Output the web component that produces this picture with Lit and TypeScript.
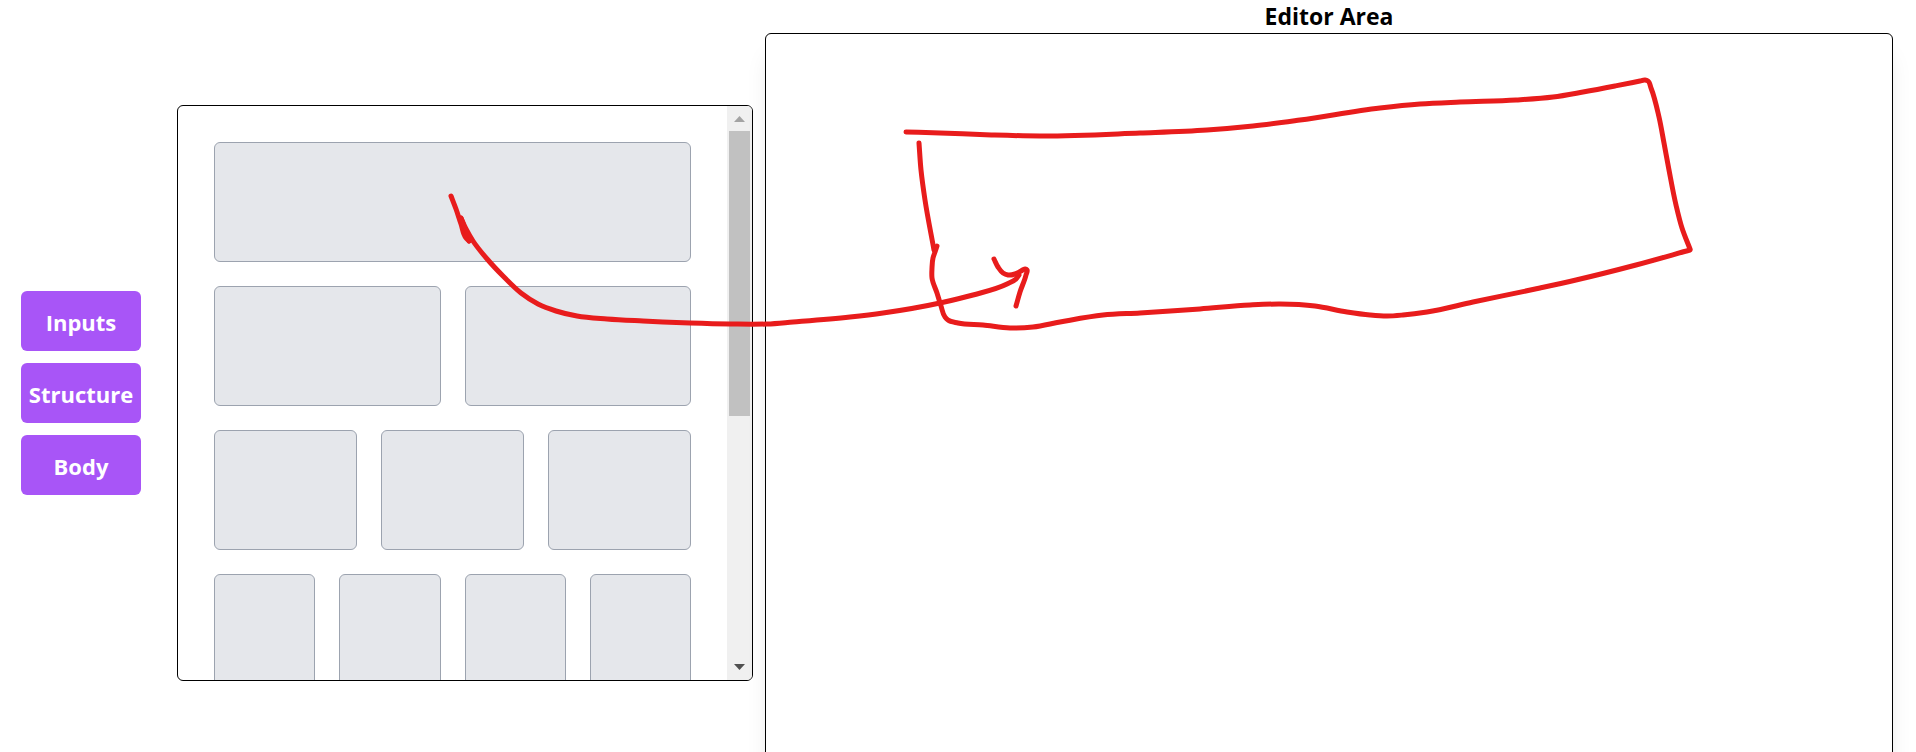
import { LitElement, html, css, svg } from "lit";
import { customElement, state } from "lit/decorators.js";
import { styleMap } from "lit/directives/style-map.js";

type Point = [number, number];

const distance = (a: Point, b: Point) => Math.hypot(b[0] - a[0], b[1] - a[1]);

/** Unit-speed tangent at each point, weighted by the length of its two neighbouring spans. */
function tangents(points: Point[]): Point[] {
  return points.map((p, i) => {
    const prev = points[i - 1];
    const next = points[i + 1];
    if (!prev || !next) {
      const [a, b] = prev ? [prev, p] : [p, next];
      const len = distance(a, b);
      return [(b[0] - a[0]) / len, (b[1] - a[1]) / len];
    }
    const before = distance(prev, p);
    const after = distance(p, next);
    const axis = (k: 0 | 1) =>
      (((p[k] - prev[k]) / before) * after + ((next[k] - p[k]) / after) * before) / (before + after);
    return [axis(0), axis(1)];
  });
}

/** Smooth Bézier path through the given points. */
function curve(points: Point[]): string {
  const t = tangents(points);
  let d = `M${points[0][0]} ${points[0][1]}`;
  for (let i = 0; i < points.length - 1; i++) {
    const a = points[i];
    const b = points[i + 1];
    const s = distance(a, b) / 3;
    d += ` C${a[0] + t[i][0] * s} ${a[1] + t[i][1] * s} ${b[0] - t[i + 1][0] * s} ${b[1] - t[i + 1][1] * s} ${b[0]} ${b[1]}`;
  }
  return d;
}

const STROKES: Point[][] = [
  // drag arrow
  [[451, 196], [456, 209], [461, 224], [466, 238], [469, 241]],
  [[469, 241], [465, 229], [461, 218]],
  [[461, 218], [466, 229], [473, 241], [488, 260], [503, 276], [521, 293], [538, 304], [556, 311], [577, 316], [607, 319], [643, 321], [690, 323], [730, 324], [767, 324], [793, 322], [850, 317], [883, 313], [940, 303], [973, 295], [1007, 284], [1016, 279], [1019, 275]],
  [[994, 259], [998, 267], [1003, 273], [1008, 275], [1015, 274], [1021, 271], [1025, 269], [1027, 270], [1026, 275], [1020, 292], [1016, 306]],
  // outline, left and bottom edges
  [[919, 143], [921, 170], [925, 200], [934, 250]],
  [[937, 246], [935, 252], [933, 258], [932, 268], [932, 278], [937, 293], [941, 306], [945, 317], [948, 320], [958, 323], [983, 325], [1010, 328], [1033, 327], [1060, 322], [1103, 315], [1140, 313], [1200, 309], [1250, 305], [1280, 304], [1315, 306], [1347, 312], [1370, 315], [1387, 316], [1403, 315], [1427, 312], [1473, 302], [1540, 288], [1576, 280], [1636, 265], [1690, 250]],
  // outline, top and right edges
  [[906, 132], [940, 133], [993, 135], [1040, 136], [1140, 133], [1207, 130], [1253, 126], [1300, 120], [1380, 108], [1420, 104], [1460, 102], [1516, 100], [1553, 97], [1583, 92], [1615, 86], [1640, 81], [1645, 80], [1648, 81], [1651, 88], [1659, 117], [1664, 143], [1669, 170], [1676, 205], [1682, 228], [1690, 249]],
];

@customElement("drag-sketch")
export class DragSketch extends LitElement {
  static styles = css`
    :host {
      position: absolute;
      top: 0;
      left: 0;
      pointer-events: none;
    }
    .ink {
      display: block;
      fill: none;
      stroke: #e81c1c;
      stroke-width: 5;
      stroke-linecap: round;
      stroke-linejoin: round;
    }
  `;

  render() {
    return html`<svg class="ink" width="1700" height="340" viewBox="0 0 1700 340" aria-hidden="true">
      ${STROKES.map((points) => svg`<path d=${curve(points)}></path>`)}
    </svg>`;
  }
}

@customElement("structure-panel")
export class StructurePanel extends LitElement {
  @state() private offset = 0;
  @state() private ratio = 0.544;

  private rows = [1, 2, 3, 4, 3, 2, 1];

  static styles = css`
    :host {
      display: flex;
      box-sizing: border-box;
      width: 576px;
      height: 576px;
      border: 1px solid #000;
      border-radius: 6px;
      overflow: hidden;
      flex: none;
    }
    .list {
      flex: 1;
      box-sizing: border-box;
      display: flex;
      flex-direction: column;
      gap: 24px;
      padding: 36px;
      overflow-y: auto;
      scrollbar-width: none;
    }
    .row {
      display: grid;
      grid-auto-flow: column;
      grid-auto-columns: 1fr;
      gap: 24px;
      flex: none;
    }
    .cell {
      box-sizing: border-box;
      height: 120px;
      background: #e5e7eb;
      border: 1px solid #9ca3af;
      border-radius: 6px;
    }
    .bar {
      display: flex;
      flex-direction: column;
      width: 25px;
      background: #f0f0f0;
    }
    .arrow {
      display: block;
      width: 25px;
      height: 25px;
      flex: none;
    }
    .up {
      fill: #a3a3a3;
    }
    .down {
      fill: #505050;
    }
    .track {
      flex: 1;
      padding: 0 2px;
    }
    .thumb {
      background: #c1c1c1;
    }
  `;

  private onScroll(e: Event) {
    const el = e.target as HTMLElement;
    this.offset = el.scrollTop / el.scrollHeight;
    this.ratio = el.clientHeight / el.scrollHeight;
  }

  render() {
    const thumb = {
      height: `${this.ratio * 100}%`,
      transform: `translateY(${(this.offset / this.ratio) * 100}%)`,
    };
    return html`
      <div class="list" @scroll=${this.onScroll}>
        ${this.rows.map(
          (count) => html`<div class="row">
            ${Array.from({ length: count }, () => html`<div class="cell" draggable="true"></div>`)}
          </div>`
        )}
      </div>
      <div class="bar" aria-hidden="true">
        <svg class="arrow up" viewBox="0 0 25 25"><path d="M7 16 L12.5 10 L18 16Z"></path></svg>
        <div class="track"><div class="thumb" style=${styleMap(thumb)}></div></div>
        <svg class="arrow down" viewBox="0 0 25 25"><path d="M7 9 L12.5 15 L18 9Z"></path></svg>
      </div>
    `;
  }
}

@customElement("app-root")
export class AppRoot extends LitElement {
  static styles = css`
    :host {
      display: block;
      position: relative;
      height: 100vh;
      overflow: hidden;
      background: #fff;
      color: #000;
      font-family: "Segoe UI", "Open Sans", "Noto Sans", sans-serif;
    }
    .page {
      display: flex;
      align-items: center;
      box-sizing: border-box;
      height: calc(100vh + 34px);
      padding: 0 23px 0 21px;
    }
    .tabs {
      display: flex;
      flex-direction: column;
      gap: 12px;
      width: 120px;
      margin-right: 36px;
      flex: none;
    }
    .tab {
      height: 60px;
      padding: 2px 0 0;
      border: 0;
      border-radius: 6px;
      background: #a855f7;
      color: #fff;
      font: inherit;
      font-size: 22px;
      font-weight: 700;
      line-height: 36px;
      cursor: pointer;
    }
    .editor {
      display: flex;
      flex-direction: column;
      flex: 1;
      align-self: stretch;
      margin-left: 12px;
    }
    .title {
      margin: 0;
      font-size: 23px;
      font-weight: 700;
      line-height: 33px;
      text-align: center;
    }
    .canvas {
      flex: 1;
      border: 1px solid #000;
      border-radius: 6px;
      box-shadow: 0 20px 25px -5px rgba(0, 0, 0, 0.1), 0 8px 10px -6px rgba(0, 0, 0, 0.1);
    }
  `;

  render() {
    return html`
      <main class="page">
        <nav class="tabs">
          ${["Inputs", "Structure", "Body"].map(
            (name) => html`<button class="tab" type="button">${name}</button>`
          )}
        </nav>
        <structure-panel></structure-panel>
        <section class="editor">
          <h1 class="title">Editor Area</h1>
          <div class="canvas"></div>
        </section>
      </main>
      <drag-sketch></drag-sketch>
    `;
  }
}
